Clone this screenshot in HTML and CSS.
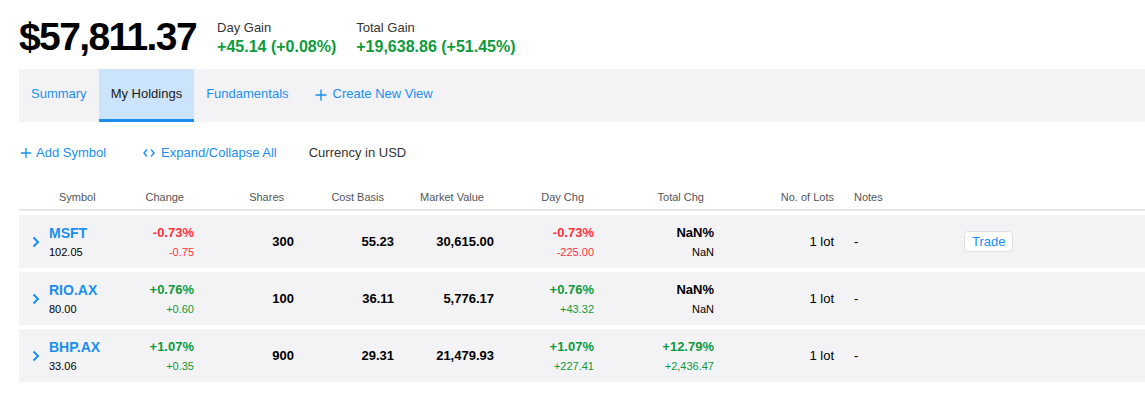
FILE: index.html
```html
<!DOCTYPE html>
<html lang="en">
<head>
<meta charset="utf-8">
<title>My Holdings</title>
<link rel="stylesheet" href="styles.css">
</head>
<body>
<div class="page">
  <div class="summary">
    <div class="total">$57,811.37</div>
    <div class="stat">
      <div class="stat-label">Day Gain</div>
      <div class="stat-value up">+45.14 (+0.08%)</div>
    </div>
    <div class="stat">
      <div class="stat-label">Total Gain</div>
      <div class="stat-value up">+19,638.86 (+51.45%)</div>
    </div>
  </div>

  <nav class="tabs">
    <a class="tab">Summary</a>
    <a class="tab active">My Holdings</a>
    <a class="tab">Fundamentals</a>
    <a class="tab tab-create"><svg class="ico-plus-lg" width="12" height="12" viewBox="0 0 12 12"><path d="M6 0.5V11.5M0.5 6H11.5" /></svg>Create New View</a>
  </nav>

  <div class="toolbar">
    <a class="tool tool-add"><svg class="ico-plus" width="10" height="10" viewBox="0 0 10 10"><path d="M5 0V10M0 5H10" /></svg>Add Symbol</a>
    <a class="tool tool-expand"><svg class="ico-code" width="12" height="10" viewBox="0 0 12 10"><path d="M4 1.5L1 5L4 8.5M8 1.5L11 5L8 8.5" /></svg>Expand/Collapse All</a>
    <span class="tool tool-currency">Currency in USD</span>
  </div>

  <div class="table">
    <div class="grid thead">
      <div></div>
      <div class="th th-sym">Symbol</div>
      <div class="th">Change</div>
      <div class="th">Shares</div>
      <div class="th">Cost Basis</div>
      <div class="th">Market Value</div>
      <div class="th">Day Chg</div>
      <div class="th">Total Chg</div>
      <div class="th th-lots">No. of Lots</div>
      <div class="th th-notes">Notes</div>
      <div></div>
    </div>

    <div class="grid trow">
      <div class="chev"><svg width="8" height="12" viewBox="0 0 8 12"><path d="M1.5 1.5L6 6L1.5 10.5" /></svg></div>
      <div class="cell-sym"><a class="sym">MSFT</a><div class="sub">102.05</div></div>
      <div class="num down"><div class="main">-0.73%</div><div class="sub">-0.75</div></div>
      <div class="num strong">300</div>
      <div class="num strong">55.23</div>
      <div class="num strong">30,615.00</div>
      <div class="num down"><div class="main">-0.73%</div><div class="sub">-225.00</div></div>
      <div class="num"><div class="main">NaN%</div><div class="sub">NaN</div></div>
      <div class="num lots">1 lot</div>
      <div class="notes">-</div>
      <div class="action"><button class="trade">Trade</button></div>
    </div>

    <div class="grid trow">
      <div class="chev"><svg width="8" height="12" viewBox="0 0 8 12"><path d="M1.5 1.5L6 6L1.5 10.5" /></svg></div>
      <div class="cell-sym"><a class="sym">RIO.AX</a><div class="sub">80.00</div></div>
      <div class="num up"><div class="main">+0.76%</div><div class="sub">+0.60</div></div>
      <div class="num strong">100</div>
      <div class="num strong">36.11</div>
      <div class="num strong">5,776.17</div>
      <div class="num up"><div class="main">+0.76%</div><div class="sub">+43.32</div></div>
      <div class="num"><div class="main">NaN%</div><div class="sub">NaN</div></div>
      <div class="num lots">1 lot</div>
      <div class="notes">-</div>
      <div class="action"></div>
    </div>

    <div class="grid trow">
      <div class="chev"><svg width="8" height="12" viewBox="0 0 8 12"><path d="M1.5 1.5L6 6L1.5 10.5" /></svg></div>
      <div class="cell-sym"><a class="sym">BHP.AX</a><div class="sub">33.06</div></div>
      <div class="num up"><div class="main">+1.07%</div><div class="sub">+0.35</div></div>
      <div class="num strong">900</div>
      <div class="num strong">29.31</div>
      <div class="num strong">21,479.93</div>
      <div class="num up"><div class="main">+1.07%</div><div class="sub">+227.41</div></div>
      <div class="num up"><div class="main">+12.79%</div><div class="sub">+2,436.47</div></div>
      <div class="num lots">1 lot</div>
      <div class="notes">-</div>
      <div class="action"></div>
    </div>
  </div>
</div>
</body>
</html>
```

FILE: styles.css
```css
* { box-sizing: border-box; }

html, body {
  margin: 0;
  padding: 0;
  background: #ffffff;
}

body {
  font-family: "Liberation Sans", Arial, Helvetica, sans-serif;
  color: #000;
  font-size: 13px;
  overflow: hidden;
}

a { cursor: pointer; }

.page {
  padding-left: 19px;
}

/* ---------- summary ---------- */
.summary {
  display: flex;
  align-items: flex-start;
  height: 69px;
  padding-top: 17px;
}

.total {
  font-size: 39px;
  line-height: 39px;
  font-weight: 700;
  letter-spacing: -1.6px;
  margin-right: 21px;
}

.stat {
  margin-top: 3px;
  margin-right: 20px;
}

.stat-label {
  font-size: 13px;
  line-height: 15px;
  color: #333;
}

.stat-value {
  margin-top: 2px;
  font-size: 16px;
  line-height: 20px;
  font-weight: 700;
}

.up { color: #0e9a3c; }
.down { color: #ff333a; }

/* ---------- tabs ---------- */
.tabs {
  display: flex;
  height: 53px;
  background: #f3f3f6;
}

.tab {
  display: flex;
  align-items: flex-start;
  height: 53px;
  padding: 17px 12px 0;
  line-height: 15px;
  font-size: 13px;
  color: #188ff0;
  border-bottom: 3px solid transparent;
}

.tab.active {
  background: #cce4fb;
  color: #1b1b1b;
  border-bottom-color: #188ff0;
}

.tab-create {
  padding-left: 14px;
}

.ico-plus-lg {
  margin-top: 3px;
  margin-right: 6px;
  fill: none;
  stroke: #188ff0;
  stroke-width: 1.4;
}

/* ---------- toolbar ---------- */
.toolbar {
  display: flex;
  align-items: flex-start;
  padding-top: 23px;
  line-height: 15px;
  font-size: 13px;
}

.tool {
  display: flex;
  align-items: center;
  color: #188ff0;
}

.tool-add {
  margin-left: 2px;
}

.ico-plus {
  margin-right: 5px;
  fill: none;
  stroke: #188ff0;
  stroke-width: 1.3;
}

.tool-expand {
  margin-left: 37px;
}

.ico-code {
  margin-right: 6px;
  fill: none;
  stroke: #188ff0;
  stroke-width: 1.4;
}

.tool-currency {
  margin-left: 32px;
  color: #333;
}

/* ---------- table ---------- */
.grid {
  display: grid;
  grid-template-columns: 30px 75px 70px 100px 100px 100px 100px 120px 120px 130px auto;
  align-items: center;
}

.thead {
  padding: 31px 0 5px;
  border-bottom: 2px solid #e6e6e9;
  font-size: 11px;
  line-height: 13px;
  color: #555;
}

.th {
  text-align: right;
  padding-right: 10px;
}

.th-sym {
  text-align: left;
  padding-left: 10px;
}

.th-lots {
  padding-right: 0;
}

.th-notes {
  text-align: left;
  padding-left: 20px;
}

.trow {
  height: 53px;
  margin-top: 4px;
  background: #f3f3f6;
}

.chev {
  padding-left: 13px;
  display: flex;
  align-items: center;
}

.chev svg {
  fill: none;
  stroke: #188ff0;
  stroke-width: 2;
}

.sym {
  display: block;
  font-size: 14px;
  line-height: 16px;
  font-weight: 700;
  color: #188ff0;
}

.sub {
  margin-top: 4px;
  font-size: 11px;
  line-height: 14px;
}

.num {
  text-align: right;
}

.num .main {
  font-size: 13px;
  line-height: 16px;
  font-weight: 700;
}

.strong {
  font-weight: 700;
  font-size: 13px;
}

.lots {
  font-size: 13px;
}

.notes {
  padding-left: 20px;
  font-size: 13px;
}

.action {
  display: flex;
}

.trade {
  height: 21px;
  padding: 0 7px;
  font-family: "Liberation Sans", Arial, Helvetica, sans-serif;
  font-size: 13px;
  line-height: 19px;
  color: #188ff0;
  background: #fff;
  border: 1px solid #dcdfe4;
  border-radius: 4px;
}
```
